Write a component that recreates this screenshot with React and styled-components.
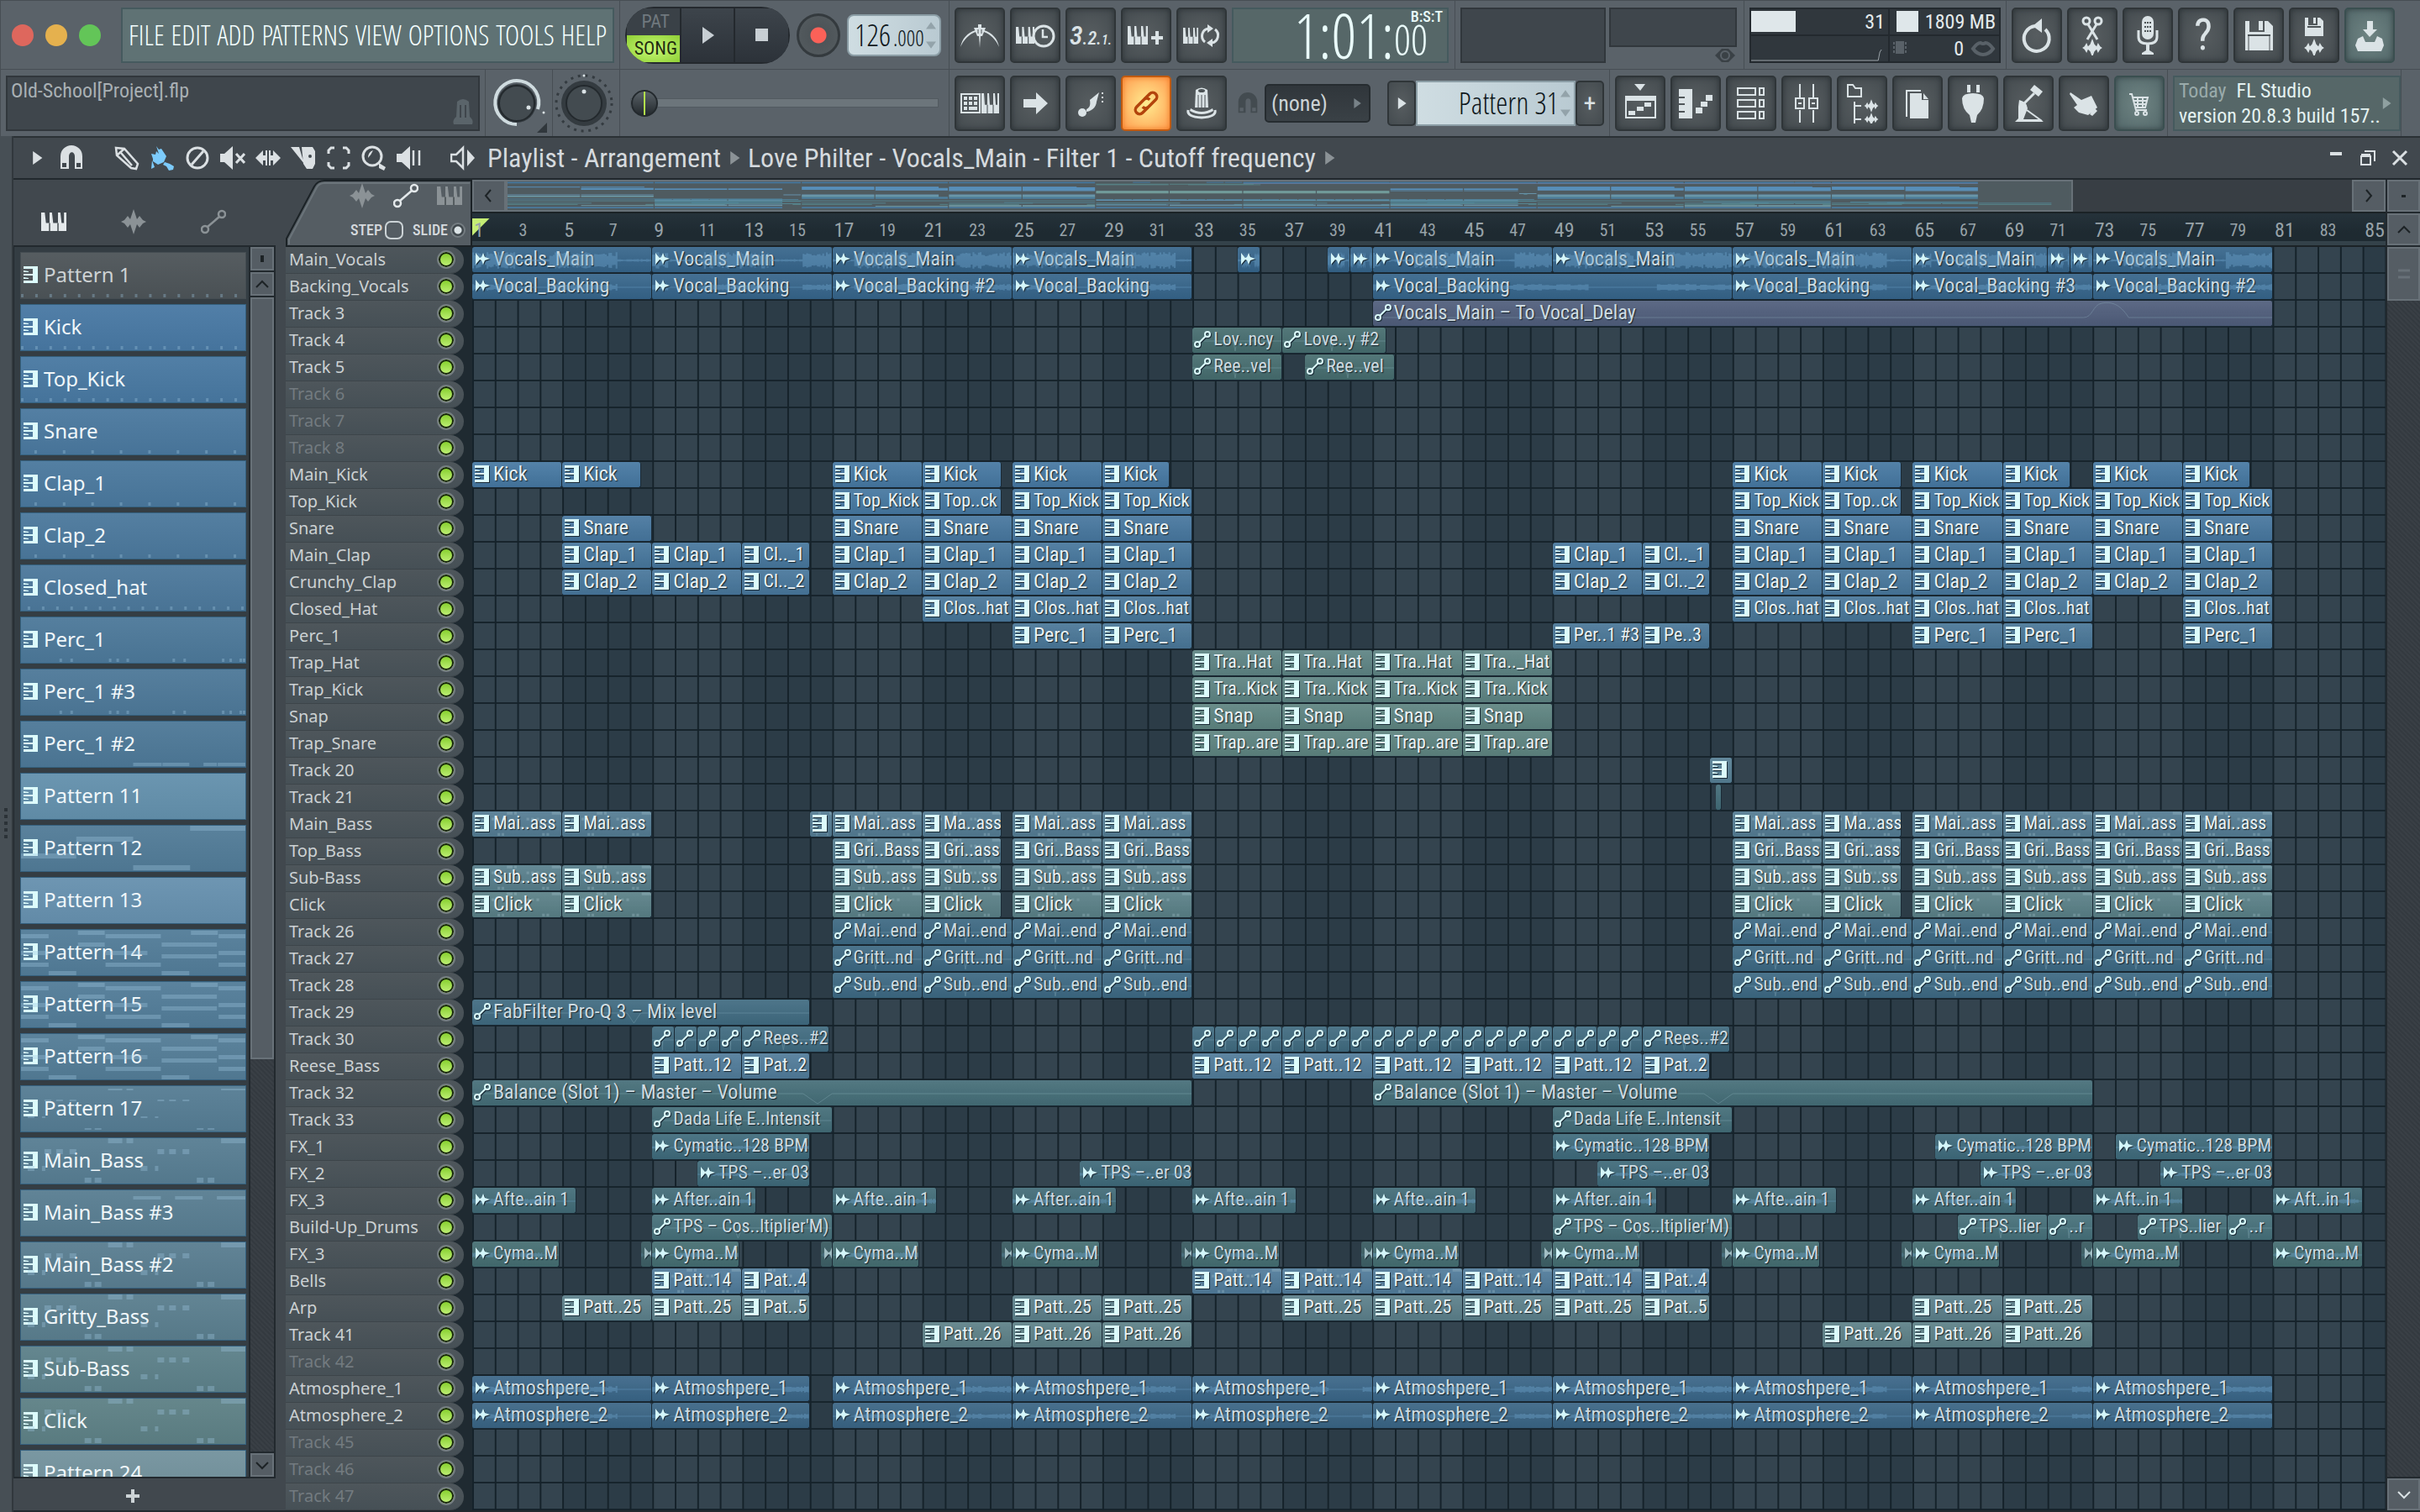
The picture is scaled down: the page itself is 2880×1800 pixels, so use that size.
import React, { useState } from "react";
import styled, { createGlobalStyle } from "styled-components";

const condensed = '"Roboto Condensed", "Open Sans Condensed", "Open Sans", sans-serif';
const light = '"Open Sans Condensed Light", "Roboto Condensed", sans-serif';

const GlobalStyle = createGlobalStyle`
  * { box-sizing: border-box; }
  body {
    margin: 0;
    background: #5a6269;
    color: #d5dade;
    font-family: ${condensed};
  }
  button, input, select {
    font-family: inherit;
    color: inherit;
    margin: 0;
    padding: 0;
    border: 0;
    background: none;
  }
  svg { display: block; flex: none; }
`;

/* ---------- data ---------- */

const BARS = 85;
const STEPS = 8;

const blocks = (starts, text, len = 4) => starts.map((s) => [s, len, text]);
const late = [57, 61, 65, 69, 73, 77];
const range = (a, b) => Array.from({ length: b - a + 1 }, (_, i) => a + i);

const drums = (text, short = text) => [
  ...blocks([17, 25, 29, 57, 65, 69, 73, 77], text),
  ...blocks([21, 61], short, 3.5),
];

const tracks = [
  {
    name: "Main_Vocals", kind: "audio", color: "#35648a", wave: 10,
    clips: [
      ...blocks([1, 9, 17, 25, 41, 49, 57, 73], "Vocals_Main", 8),
      [65, 6, "Vocals_Main"],
      ...blocks([35, 39, 40, 71, 72], "", 1),
    ],
  },
  {
    name: "Backing_Vocals", kind: "audio", color: "#35648a", wave: 4,
    clips: [
      ...blocks([1, 9, 25, 57], "Vocal_Backing", 8),
      [41, 16, "Vocal_Backing"],
      [17, 8, "Vocal_Backing #2"],
      [65, 8, "Vocal_Backing #3"],
      [73, 8, "Vocal_Backing #2"],
    ],
  },
  { name: "Track 3", kind: "auto", color: "#4f5d7b", clips: [[41, 40, "Vocals_Main – To Vocal_Delay"]] },
  { name: "Track 4", kind: "auto", color: "#456c6e", clips: [[33, 4, "Lov..ncy"], [37, 4.625, "Love..y #2"]] },
  { name: "Track 5", kind: "auto", color: "#456c6e", clips: [[33, 4, "Ree..vel"], [38, 4, "Ree..vel"]] },
  { name: "Track 6", off: true },
  { name: "Track 7", off: true },
  { name: "Track 8", off: true },
  {
    name: "Main_Kick", kind: "notes", color: "#4577a1",
    clips: [
      ...blocks([1, 17, 25, 57, 65, 73], "Kick"),
      ...blocks([5, 21, 61], "Kick", 3.5),
      ...blocks([29, 69, 77], "Kick", 3),
    ],
  },
  { name: "Top_Kick", kind: "notes", color: "#4577a0", clips: drums("Top_Kick", "Top..ck") },
  { name: "Snare", kind: "notes", color: "#46769e", clips: blocks([5, 17, 21, 25, 29, ...late], "Snare") },
  {
    name: "Main_Clap", kind: "notes", color: "#46769c",
    clips: [...blocks([5, 9, 17, 21, 25, 29, 49, ...late], "Clap_1"), ...blocks([13, 53], "Cl.._1", 3)],
  },
  {
    name: "Crunchy_Clap", kind: "notes", color: "#47769b",
    clips: [...blocks([5, 9, 17, 21, 25, 29, 49, ...late], "Clap_2"), ...blocks([13, 53], "Cl.._2", 3)],
  },
  { name: "Closed_Hat", kind: "notes", color: "#487699", clips: blocks([21, 25, 29, 57, 61, 65, 69, 77], "Clos..hat") },
  {
    name: "Perc_1", kind: "notes", color: "#497697",
    clips: [...blocks([25, 29, 65, 69, 77], "Perc_1"), [49, 4, "Per..1 #3"], [53, 3, "Pe..3"]],
  },
  { name: "Trap_Hat", kind: "notes", color: "#5d8383", clips: [...blocks([33, 37, 41], "Tra..Hat"), [45, 4, "Tra.._Hat"]] },
  { name: "Trap_Kick", kind: "notes", color: "#5d8382", clips: blocks([33, 37, 41, 45], "Tra..Kick") },
  { name: "Snap", kind: "notes", color: "#5d8380", clips: blocks([33, 37, 41, 45], "Snap") },
  { name: "Trap_Snare", kind: "notes", color: "#5d837f", clips: blocks([33, 37, 41, 45], "Trap..are") },
  { name: "Track 20", kind: "notes", color: "#557e93", clips: [[56, 1, ""]] },
  { name: "Track 21", kind: "sliver", color: "#426c78", clips: [[56.25, 0.25, ""]] },
  {
    name: "Main_Bass", kind: "notes", color: "#537b92", dots: true,
    clips: [...blocks([1, 5], "Mai..ass"), [16, 1, ""], ...drums("Mai..ass", "Ma..ass")],
  },
  { name: "Top_Bass", kind: "notes", color: "#547c90", dots: true, clips: drums("Gri..Bass", "Gri..ass") },
  { name: "Sub-Bass", kind: "notes", color: "#577e8b", dots: true, clips: [...blocks([1, 5], "Sub..ass"), ...drums("Sub..ass", "Sub..ss")] },
  { name: "Click", kind: "notes", color: "#597f86", dots: true, clips: [...blocks([1, 5], "Click"), ...drums("Click")] },
  { name: "Track 26", kind: "auto", color: "#3c6882", clips: blocks([17, 21, 25, 29, ...late], "Mai..end") },
  { name: "Track 27", kind: "auto", color: "#3c6882", clips: blocks([17, 21, 25, 29, ...late], "Gritt..nd") },
  { name: "Track 28", kind: "auto", color: "#3c6882", clips: blocks([17, 21, 25, 29, ...late], "Sub..end") },
  { name: "Track 29", kind: "auto", color: "#3f6a80", clips: [[1, 15, "FabFilter Pro-Q 3 – Mix level"]] },
  {
    name: "Track 30", kind: "auto", color: "#3f6a7f",
    clips: [...blocks([...range(9, 12), ...range(33, 52)], "", 1), ...blocks([13, 53], "Rees..#2", 3.875)],
  },
  {
    name: "Reese_Bass", kind: "notes", color: "#507b99",
    clips: [...blocks([9, 33, 37, 41, 45, 49], "Patt..12"), ...blocks([13, 53], "Pat..2", 3)],
  },
  { name: "Track 32", kind: "auto", color: "#446d77", clips: blocks([1, 41], "Balance (Slot 1) – Master – Volume", 32) },
  { name: "Track 33", kind: "auto", color: "#426c77", clips: blocks([9, 49], "Dada Life E..Intensit", 8) },
  { name: "FX_1", kind: "audio", color: "#3e6a7b", wave: 2, clips: blocks([9, 49, 66, 74], "Cymatic..128 BPM", 7) },
  { name: "FX_2", kind: "audio", color: "#3e6979", wave: 2, clips: blocks([11, 28, 51, 68, 76], "TPS –..er 03", 5) },
  {
    name: "FX_3", kind: "audio", color: "#416b77", wave: 3,
    clips: [
      ...blocks([1, 17, 33, 41, 57], "Afte..ain 1", 4.625),
      ...blocks([9, 25, 49, 65], "After..ain 1", 4.625),
      ...blocks([73, 81], "Aft..in 1", 4),
    ],
  },
  {
    name: "Build-Up_Drums", kind: "auto", color: "#456f79",
    clips: [
      ...blocks([9, 49], "TPS – Cos..ltiplier'M)", 8),
      ...blocks([67, 75], "TPS..lier", 4),
      ...blocks([71, 79], "..r", 2),
    ],
  },
  {
    name: "FX_3", kind: "audio", color: "#446d71", wave: 3,
    clips: [
      ...blocks([1, 9, 17, 25, 33, 41, 49, 57, 65, 73], "Cyma..M", 3.875),
      [81, 4, "Cyma..M"],
      ...blocks([8.5, 16.5, 24.5, 32.5, 40.5, 48.5, 56.5, 64.5, 72.5], null, 0.5),
    ],
  },
  {
    name: "Bells", kind: "notes", color: "#507b9a", dots: true,
    clips: [...blocks([9, 33, 37, 41, 45, 49], "Patt..14"), ...blocks([13, 53], "Pat..4", 3)],
  },
  {
    name: "Arp", kind: "notes", color: "#5b7f8a",
    clips: [...blocks([5, 9, 25, 29, 37, 41, 45, 49, 65, 69], "Patt..25"), ...blocks([13, 53], "Pat..5", 3)],
  },
  { name: "Track 41", kind: "notes", color: "#5c8087", clips: blocks([21, 25, 29, 61, 65, 69], "Patt..26") },
  { name: "Track 42", off: true },
  {
    name: "Atmosphere_1", kind: "audio", color: "#396587", wave: 4,
    clips: [...blocks([1, 17, 25, 33, 41, 49, 57, 65, 73], "Atmoshpere_1", 8), [9, 7, "Atmoshpere_1"]],
  },
  {
    name: "Atmosphere_2", kind: "audio", color: "#396484", wave: 3,
    clips: [...blocks([1, 17, 25, 33, 41, 49, 57, 65, 73], "Atmosphere_2", 8), [9, 7, "Atmosphere_2"]],
  },
  { name: "Track 45", off: true },
  { name: "Track 46", off: true },
  { name: "Track 47", off: true },
];

const every = (n, from) => {
  const out = [];
  for (let x = from; x < 268; x += n) out.push([x, 50, 3, 4]);
  return out;
};
const perc = [46, 59, 105, 114, 126, 181, 194, 240, 249, 261, 265].map((x) => [x, 50, 3, 4]);
const chords = [
  [68, 2, 32, 5], [203, 2, 32, 5], [0, 6, 33, 5], [101, 6, 66, 5], [236, 6, 33, 5],
  [68, 16, 32, 5], [168, 16, 66, 5], [0, 26, 33, 5], [101, 26, 50, 5], [168, 30, 66, 5], [236, 26, 33, 5],
  [0, 40, 33, 5], [101, 40, 66, 5], [236, 40, 33, 5], [33, 50, 33, 5], [168, 50, 33, 5],
];
const bassLine = [
  [104, 1, 17, 6], [126, 1, 8, 6], [239, 1, 29, 6], [28, 14, 8, 6], [42, 14, 8, 6], [58, 14, 8, 6],
  [163, 14, 8, 6], [177, 14, 8, 6], [193, 14, 8, 6], [8, 34, 8, 6], [25, 34, 4, 6],
  [143, 34, 8, 6], [160, 34, 4, 6], [76, 48, 8, 6], [88, 48, 8, 6], [210, 48, 8, 6], [223, 48, 8, 6],
];
const thinBass = bassLine.map(([x, y, w]) => [x, y + 3, w, 2]);

const patterns = [
  { name: "Pattern 1", color: "#4d5458", plain: true, notes: every(17, 0) },
  { name: "Kick", color: "#4878a3", notes: every(17, 0) },
  { name: "Top_Kick", color: "#4878a1", notes: every(17, 0) },
  { name: "Snare", color: "#4a789e", notes: every(34, 16) },
  { name: "Clap_1", color: "#4a789d", notes: every(34, 16) },
  { name: "Clap_2", color: "#4b789c", notes: every(34, 16) },
  { name: "Closed_hat", color: "#4c789b", notes: every(17, 8) },
  { name: "Perc_1", color: "#4c7899", notes: perc },
  { name: "Perc_1 #3", color: "#4d7898", notes: perc },
  { name: "Perc_1 #2", color: "#4d7897", notes: [[134, 50, 34, 4], [169, 50, 32, 4], [218, 50, 16, 4], [235, 50, 34, 4]] },
  { name: "Pattern 11", color: "#6390ac", notes: [] },
  { name: "Pattern 12", color: "#517b97", notes: [[202, 1, 67, 6], [66, 14, 68, 6], [0, 34, 66, 6], [134, 48, 68, 6]] },
  { name: "Pattern 13", color: "#6690ae", notes: [] },
  { name: "Pattern 14", color: "#527c98", notes: chords },
  { name: "Pattern 15", color: "#527c98", notes: chords },
  { name: "Pattern 16", color: "#537c96", notes: chords },
  { name: "Pattern 17", color: "#557c93", notes: thinBass },
  { name: "Main_Bass", color: "#577d92", notes: bassLine },
  { name: "Main_Bass #3", color: "#587d91", notes: [[134, 8, 33, 4], [184, 8, 33, 4], [234, 8, 34, 4]] },
  { name: "Main_Bass #2", color: "#597d90", notes: bassLine },
  { name: "Gritty_Bass", color: "#5a7e8e", notes: bassLine },
  { name: "Sub-Bass", color: "#5c8089", notes: bassLine },
  { name: "Click", color: "#5d8085", notes: bassLine },
  { name: "Pattern 24", color: "#73929d", notes: [] },
];

/* ---------- icons ---------- */

const Keys = ({ x = 0, y = 0, w = 21, h = 21 }) => (
  <g transform={`translate(${x} ${y}) scale(${w / 21} ${h / 21})`}>
    <path d="M0 0h3l1 12h3V0h2l1 12h4V0h2l1 12h2V0h2v21H0z" />
    <path d="M7 12v9M14 12v9" stroke="#3f474b" strokeWidth="1" />
  </g>
);

const Sparkle = ({ x, y, s = 1 }) => (
  <path
    transform={`translate(${x} ${y}) scale(${s})`}
    d="M-14 0l3-2 3-5 2 5 3-3 3-8 3 8 3 3 2-5 3 5 3 2-3 2-3 5-2-5-3 3-3 8-3-8-3-3-2 5-3-5z"
  />
);

const line = { fill: "none", stroke: "currentColor" };

const icons = {
  metronome: (
    <>
      <path d="M1 38C3 28 9 21 19 18v2C11 23 5 29 1 38zM47 38C45 28 39 21 29 18v2c8 3 14 9 18 18z" />
      <path d="M17 15h5v-4h4v4h5l-4 10h-6z" />
      <path d="M23 24h2l-1 15z" />
      <path d="M22 17v5M26 17v5" stroke="#4c5356" />
    </>
  ),
  wait: (
    <>
      <Keys x={1} y={14} w={22} h={20} />
      <circle cx="34" cy="25" r="12" fill="#51585b" stroke="currentColor" strokeWidth="3" />
      <path d="M33 17v9h6" {...line} strokeWidth="2.5" />
    </>
  ),
  keysPlus: (
    <>
      <Keys x={2} y={13} w={24} h={22} />
      <path d="M35 19h4v6h5v4h-5v6h-4v-6h-5v-4h5z" />
    </>
  ),
  keysLoop: (
    <>
      <Keys x={2} y={15} w={18} h={19} />
      <path d="M28 32a9 9 0 0 1 4-16M40 17a9 9 0 0 1-4 16" {...line} strokeWidth="3" />
      <path d="M31 11l7 5-7 5zM37 38l-7-5 7-5z" />
    </>
  ),
  typing: (
    <>
      <path d="M2 13h22v22H2z" {...line} strokeWidth="2" />
      <path d="M5 16h4v4H5zM11 16h4v4h-4zM17 16h4v4h-4zM5 22h4v4H5zM11 22h4v4h-4zM17 22h4v4h-4zM5 28h4v4H5zM11 28h10v4H11z" />
      <Keys x={26} y={12} w={21} h={24} />
    </>
  ),
  arrow: <path d="M10 19h15v-8l14 13-14 13v-8H10z" />,
  slide: (
    <>
      <circle cx="14" cy="35" r="5" />
      <path d="M19 34c8-1 13-7 12-16l-8 2c1 6 0 9-4 11z" />
      <path d="M23 20l11-9-3 11z" />
      <path d="M38 11v14" {...line} strokeWidth="2" strokeDasharray="2 3" />
    </>
  ),
  link: (
    <g {...line} strokeWidth="3.5" transform="rotate(-45 24 24)">
      <path d="M22 29h-9a5 5 0 0 1 0-10h12a5 5 0 0 1 5 5" />
      <path d="M26 19h9a5 5 0 0 1 0 10H23a5 5 0 0 1-5-5" />
    </g>
  ),
  knob: (
    <>
      <path d="M17 8q7-5 14 0l1 21H16z" />
      <ellipse cx="24" cy="9" rx="4" ry="2" fill="#4c5356" />
      <path d="M20 14v15M24 14v15M28 14v15" stroke="#4c5356" />
      <path d="M11 30q13 8 26 0l1 3q-14 8-28 0z" />
      <path d="M8 32q-2 8 16 9 18-1 16-9" {...line} strokeWidth="3" />
    </>
  ),
  playlist: (
    <>
      <path d="M17 1h13l-6 8zM6 15h37v6H6z" />
      <path d="M7 16h35v25H7z" {...line} strokeWidth="2" />
      <path d="M10 33h8v5h-8zM20 28h8v5h-8zM29 23h8v5h-8z" />
    </>
  ),
  pianoroll: (
    <>
      <path d="M4 7h16v35H4v-7h7v-2H4v-7h7v-2H4v-6h7v-2H4z" />
      <path d="M24 29h8v7h-8zM30 22h8v6h-8zM36 14h8v7h-8z" />
    </>
  ),
  rack: (
    <path
      d="M8 6h21v8H8zM34 6h5v8h-5zM8 20h21v8H8zM34 20h5v8h-5zM8 34h21v8H8zM34 34h5v8h-5z"
      {...line}
      strokeWidth="2"
    />
  ),
  mixer: (
    <g {...line} strokeWidth="2">
      <path d="M16 1v16M32 1v16M16 32v15M32 32v15M11 18h10v12H11zM27 18h10v12H27z" />
      <path d="M14 24h4M30 24h4" />
    </g>
  ),
  browser: (
    <>
      <path d="M7 2h6l3 4h7v10H7zM15 22v26M15 27h8M15 43h8" {...line} strokeWidth="2" />
      <Sparkle x={35} y={27} s={0.6} />
      <Sparkle x={35} y={43} s={0.6} />
    </>
  ),
  files: (
    <>
      <path d="M11 40V9h17" {...line} strokeWidth="2" />
      <path d="M15 12h14v8h8v22H15z" />
      <path d="M31 12l6 7h-6z" />
    </>
  ),
  plug: (
    <path d="M17 2h4v9h-4zM28 2h4v9h-4zM11 18q1-6 13-6t13 6q0 13-8 20l-2 9h-5l-2-9q-9-7-9-20z" />
  ),
  lamp: (
    <>
      <path d="M31 2l10 8-5 6-10-8z" />
      <path d="M31 12L19 24" {...line} strokeWidth="3" />
      <path d="M13 20q9 2 10 10l-5 13h20l4 3H8l4-4V28z" />
      <path d="M22 32l18 13" {...line} strokeWidth="2" />
    </>
  ),
  hand: <path d="M8 11l13 9 12-5 7 14-11 9-11-3-6-6 4-3-9-13zM37 30l3 3-6 6-3-2z" />,
  cart: (
    <g {...line} strokeWidth="2">
      <path d="M12 13h3l5 19h13M16 17h18l-3 12H19M17 21h16M18 25h14M22 17v12M28 17v12" />
      <circle cx="21" cy="36" r="2" />
      <circle cx="31" cy="36" r="2" />
    </g>
  ),
  undo: (
    <>
      <path d="M22 13a15 15 0 1 0 12 4" {...line} strokeWidth="4" />
      <path d="M30 4v17L19 13z" />
    </>
  ),
  cutWave: (
    <>
      <g {...line} strokeWidth="3">
        <circle cx="17" cy="7" r="4" />
        <circle cx="31" cy="7" r="4" />
        <path d="M19 11l11 18M29 11L18 29" />
      </g>
      <Sparkle x={24} y={39} s={0.85} />
    </>
  ),
  mic: (
    <>
      <rect x="17" y="1" width="14" height="28" rx="7" />
      <path d="M20 9h8M20 14h8M20 19h8" stroke="#4c5356" strokeWidth="2" strokeDasharray="2 1" />
      <path d="M13 18v8q0 8 11 8t11-8v-8" {...line} strokeWidth="3" />
      <path d="M22 34h4v8l5 3v2H17v-2l5-3z" />
    </>
  ),
  save: (
    <>
      <path d="M8 7h5v13h18V7h4l6 6v29H8z" />
      <path d="M24 7h5v11h-5z" />
      <path d="M11 24h27" stroke="#4c5356" strokeWidth="2" />
      <path d="M12 25v17M37 25v17" stroke="#4c5356" />
    </>
  ),
  saveWave: (
    <>
      <path d="M13 3h4v9h11V3h3l4 4v18H13z" />
      <path d="M23 3h3v7h-3z" />
      <path d="M16 14h16" stroke="#4c5356" strokeWidth="2" />
      <Sparkle x={24} y={39} s={0.85} />
    </>
  ),
  download: (
    <>
      <path d="M21 7h7v10h5l-9 9-8-9h5z" />
      <path d="M10 28l6-3 3 7h11l3-7 6 3 2 8-3 7H10l-3-7z" />
    </>
  ),
};

const Icon = ({ name, size = 48 }) => (
  <svg width={size} height={size} viewBox="0 0 48 48" fill="currentColor" aria-hidden="true">
    {icons[name]}
  </svg>
);

const toolIcons = {
  magnet: <path d="M2 28V13a12 12 0 0 1 26 0v15h-9V13a3 4 0 0 0-7 0v15zM4 21v5h5v-5zM21 21v5h5v-5z" fillRule="evenodd" />,
  pencil: (
    <g {...line} strokeWidth="2.5">
      <path d="M2 3l10 1 16 18-2 6-6-1L3 12zM8 9l13 15M12 4l-9 8" />
    </g>
  ),
  brush: (
    <path d="M8 1l3 4 3-1 6 9-3 7-7 3-6-4 0-3-2-6 5 1 1-4 3 3zM3 18l3 8-4 2zM18 20l6 2 5 3-1 4-5 1-3-5-4-2z" />
  ),
  ban: (
    <g {...line} strokeWidth="3">
      <circle cx="15" cy="15" r="12" />
      <path d="M8 23L22 7" />
    </g>
  ),
  mute: (
    <>
      <path d="M0 10h5l10-9v28L5 20H0z" />
      <path d="M19 10l10 11M29 10L19 21" {...line} strokeWidth="3" />
    </>
  ),
  slip: <path d="M0 15l9-9v6h3V6h2v18h-2v-6H9v6zM30 15l-9-9v6h-3V6h-2v18h2v-6h3v6z" />,
  slice: (
    <>
      <path d="M0 2h10l6 20zM13 2h13l3 5v15l-3 6h-7l-4-6z" />
      <circle cx="23" cy="13" r="2" fill="#41484e" />
    </>
  ),
  select: <path d="M3 10V6l3-3h4M20 3h4l3 3v4M27 20v4l-3 3h-4M10 27H6l-3-3v-4" {...line} strokeWidth="3" />,
  zoom: (
    <>
      <circle cx="13" cy="13" r="11" {...line} strokeWidth="3" />
      <path d="M8 15q0-7 6-9-2 5-6 9zM21 21l8 5-2 4-6-3z" />
    </>
  ),
  preview: (
    <>
      <path d="M0 10h6l10-9v28L6 20H0z" />
      <path d="M20 6v18M27 6v18" {...line} strokeWidth="2.5" />
    </>
  ),
  output: (
    <>
      <path d="M1 11h6l8-8v24l-8-8H1z" {...line} strokeWidth="2.5" />
      <path d="M20 5l9 10-9 10z" />
    </>
  ),
  keys: <Keys x={0} y={4} w={30} h={22} />,
  wave: <path d="M0 15l4-2 4-5 3 4 4-12 4 12 3-4 4 5 4 2-4 2-4 5-3-4-4 12-4-12-3 4-4-5z" />,
  auto: (
    <g {...line} strokeWidth="2.5">
      <circle cx="5" cy="24" r="4" />
      <circle cx="25" cy="6" r="4" />
      <path d="M8 21L22 9" />
    </g>
  ),
};

const ToolIcon = ({ name, size = 30 }) => (
  <svg width={size} height={size} viewBox="0 0 30 30" fill="currentColor" aria-hidden="true">
    {toolIcons[name]}
  </svg>
);

const KeyGlyph = () => (
  <svg width="18" height="20" viewBox="0 0 18 20" fill="#dcfcfc" aria-hidden="true">
    <path d="M11 0h6v20h-6zM0 0h12v3H0zM0 9h12v2H0zM0 17h12v3H0zM0 5l6 1v1H0zM0 13l6 1v1H0z" />
  </svg>
);

const clipGlyphs = {
  notes: <KeyGlyph />,
  audio: (
    <svg width="18" height="18" viewBox="0 0 18 18" fill="#d4f6fa" aria-hidden="true">
      <path d="M1 2l5 6 2-1 2-5 2 5 6 2-6 2-2 5-2-5-2-1-5 6z" />
    </svg>
  ),
  auto: (
    <svg width="22" height="22" viewBox="0 0 22 22" fill="none" stroke="#dcfcfc" strokeWidth="2" aria-hidden="true">
      <circle cx="5" cy="17" r="3" />
      <circle cx="17" cy="5" r="3" />
      <path d="M7 15l8-8" />
    </svg>
  ),
};

const Triangle = ({ dir = "right", size = 10, color = "currentColor" }) => {
  const d = { right: "M2 0l7 5-7 5z", up: "M0 8l5-7 5 7z", down: "M0 2l5 7 5-7z" }[dir];
  return (
    <svg width={size} height={size} viewBox="0 0 10 10" preserveAspectRatio="none" fill={color} aria-hidden="true">
      <path d={d} />
    </svg>
  );
};

const Chevron = ({ dir, color = "#1d2326" }) => {
  const d = { left: "M11 2L5 9l6 7", right: "M6 2l6 7-6 7", up: "M2 13l7-7 7 7", down: "M2 6l7 7 7-7" }[dir];
  return (
    <svg width="18" height="18" viewBox="0 0 18 18" fill="none" stroke={color} strokeWidth="2" aria-hidden="true">
      <path d={d} />
    </svg>
  );
};

/* ---------- top toolbar ---------- */

const Toolbar = styled.header`
  background: #5a6269;
  border-left: 1px solid #474e54;
`;

const ToolRow = styled.div`
  display: flex;
  height: ${(p) => p.$height}px;
  border-top: 1px solid #474e54;
`;

const Group = styled.div`
  display: flex;
  align-items: center;
  flex: ${(p) => (p.$grow ? "1 1 0" : "0 0 auto")};
  gap: ${(p) => p.$gap || 6}px;
  width: ${(p) => (p.$width ? `${p.$width}px` : "auto")};
  padding: 0 ${(p) => p.$pad ?? 6}px;
  border-right: ${(p) => (p.$last ? "0" : "1px solid #474e54")};
`;

const Lights = styled.div`
  display: flex;
  gap: 14px;
  padding: 0 18px 0 13px;
`;

const Light = styled.button`
  width: 26px;
  height: 26px;
  border-radius: 50%;
  background: ${(p) => p.$color};
`;

const MenuBar = styled.nav`
  display: flex;
  flex: 1;
  height: 66px;
  align-items: center;
  justify-content: space-between;
  margin-right: 6px;
  padding: 0 7px;
  background: #5f7274;
  border: 2px solid #455a5e;
`;

const MenuItem = styled.button`
  font-family: ${light};
  font-size: 33px;
  color: #f4ffff;
`;

const Transport = styled.div`
  display: flex;
  height: 68px;
  width: 196px;
  gap: 2px;
  padding: 2px;
  overflow: hidden;
  border-radius: 34px;
  background: #24292e;
`;

const ModeSwitch = styled.div`
  display: flex;
  flex-direction: column;
  flex: 1;
`;

const ModeButton = styled.button`
  flex: 1;
  font-size: 22px;
  line-height: 30px;
  padding-left: 6px;
  color: ${(p) => (p.$active ? "#1f2a10" : "#70787e")};
  background: ${(p) => (p.$active ? "radial-gradient(#c8fa78, #8fcf35)" : "#3a4147")};
`;

const TransportButton = styled.button`
  flex: 1;
  display: flex;
  align-items: center;
  justify-content: center;
  color: #c8cfd4;
  background: linear-gradient(#3d444b, #2c3239);
`;

const RecordButton = styled.button`
  width: 52px;
  height: 52px;
  border-radius: 50%;
  border: 3px solid #343a3e;
  background: radial-gradient(circle, #fb6158 9px, #4d5458 10px, #565d61);
`;

const Tempo = styled.label`
  display: flex;
  align-items: center;
  width: 112px;
  height: 50px;
  padding: 0 4px 0 7px;
  color: #10181c;
  border: 2px solid #8b9da5;
  border-radius: 8px;
  background: linear-gradient(90deg, #cfdde2, #b9cad2);

  input {
    width: 46px;
    font-family: ${light};
    font-size: 36px;
    line-height: 44px;
  }
  span {
    flex: 1;
    font-family: ${light};
    font-size: 26px;
    padding-top: 6px;
  }
`;

const Spinner = styled.span`
  && {
    display: flex;
    flex: none;
    flex-direction: column;
    gap: 10px;
    padding: 0;
  }
`;

const ToolButton = styled.button`
  display: flex;
  align-items: center;
  justify-content: center;
  flex: none;
  width: 60px;
  height: 66px;
  color: ${(p) => (p.$hot ? "#b3440c" : "#dbe3e6")};
  border: 2px solid ${(p) => (p.$hot ? "#c05a10" : p.$tint ? "#3a4f50" : "#2f3538")};
  border-radius: 5px;
  box-shadow: inset 0 0 6px ${(p) => (p.$hot ? "#f07820" : "rgba(20, 26, 30, 0.5)")};
  background: ${(p) =>
    p.$hot
      ? "radial-gradient(#ffec90, #ff9c50)"
      : p.$tint
        ? "radial-gradient(#6f8483, #53686a)"
        : "radial-gradient(#575d60, #444b4f)"};
`;

const CountIn = styled.span`
  font-size: 32px;
  font-style: italic;
  font-weight: 500;

  small { font-size: 22px; }
  sub { font-size: 16px; vertical-align: baseline; }
`;

const Help = styled.span`
  font-size: 52px;
  line-height: 60px;
`;

const TimeDisplay = styled.output`
  display: flex;
  justify-content: flex-end;
  width: 258px;
  height: 66px;
  padding-right: 5px;
  font-family: ${light};
  font-size: 74px;
  line-height: 62px;
  color: #eafcfb;
  background: #566768;
  border: 2px solid #455a5e;
`;

const TimeTail = styled.span`
  display: flex;
  flex-direction: column;
  align-items: flex-end;
  justify-content: space-between;
  height: 62px;
  font-size: 50px;
  line-height: 36px;

  b { padding: 0 18px 8px 0; font-weight: 400; }
`;

const TimeUnits = styled.small`
  font-family: ${condensed};
  font-size: 18px;
  line-height: 18px;
  font-weight: 500;
`;

const Panel = styled.div`
  display: flex;
  flex: ${(p) => p.$flex || "none"};
  height: ${(p) => p.$height || 66}px;
  background: #3f464c;
  border: 2px solid #31373c;
`;

const Scope = styled.div`
  display: flex;
  flex: 154 1 0;
  height: 66px;
  flex-direction: column;
  align-items: flex-end;
  gap: 1px;
  padding-right: 2px;

  > div { align-self: stretch; }
`;

const Monitor = styled.div`
  display: grid;
  grid-template-columns: 163fr 130fr;
  gap: 2px 2px;
  flex: 1;
  height: 66px;
  padding: 2px;
  background: #23292e;
  font-size: 24px;
  line-height: 28px;
  color: #e4eaec;
`;

const MonitorCell = styled.div`
  display: flex;
  align-items: center;
  justify-content: space-between;
  height: 30px;
  padding: 0 4px 0 ${(p) => p.$inset || 0}px;
  background: #30373d;
`;

const VoiceCount = styled.span`
  flex: 1;
  padding-right: 8px;
  text-align: right;
`;

const Meter = styled.i`
  width: ${(p) => p.$width}px;
  height: 25px;
  background: #dfe7ea;
`;

const HintPanel = styled(Panel)`
  flex: 1;
  padding: 2px 4px 4px;
  font-size: 24px;
  line-height: 28px;
  color: #a9b0b4;
  justify-content: space-between;

  svg { align-self: flex-end; }
`;

const KnobButton = styled.button`
  display: flex;
`;

const PitchRange = styled.input`
  appearance: none;
  flex: 1;
  height: 40px;

  &::-webkit-slider-runnable-track {
    height: 11px;
    background: #6c757b;
    border: 1px solid #525a60;
  }
  &::-webkit-slider-thumb {
    appearance: none;
    width: 32px;
    height: 32px;
    margin-top: -11px;
    border-radius: 50%;
    border: 2px solid #23292d;
    background: linear-gradient(90deg, transparent 13px, #b2e04c 13px, #b2e04c 15px, transparent 15px),
      linear-gradient(#5a6268, #23292d);
  }
`;

const SnapField = styled.label`
  display: flex;
  align-items: center;
  justify-content: space-between;
  width: 126px;
  height: 46px;
  padding: 0 8px 0 6px;
  color: #ccd3d6;
  border: 2px solid #262c30;
  border-radius: 5px;
  background: linear-gradient(#30363b, #3a4146);

  select {
    appearance: none;
    flex: 1;
    min-width: 0;
    font-size: 26px;
  }
`;

const SnapMagnet = styled.span`
  color: #434b50;
`;

const PatternPicker = styled.div`
  display: flex;
  align-items: stretch;
  height: 54px;
`;

const SideButton = styled.button`
  display: flex;
  align-items: center;
  justify-content: center;
  width: 34px;
  font-size: 30px;
  color: #dbe3e6;
  border: 2px solid #2f3538;
  border-radius: 5px;
  background: radial-gradient(#575d60, #444b4f);
`;

const PatternField = styled.label`
  display: flex;
  align-items: center;
  width: 190px;
  padding-right: 4px;
  color: #10181c;
  border: 2px solid #8b9da5;
  background: linear-gradient(90deg, #cfdde2, #b9cad2);

  select {
    appearance: none;
    flex: 1;
    min-width: 0;
    padding-right: 2px;
    font-family: ${light};
    font-size: 36px;
    text-align: right;
    text-align-last: right;
  }
`;

const News = styled.a`
  display: flex;
  align-items: center;
  flex: 1;
  height: 66px;
  padding: 0 8px 0 5px;
  font-size: 24px;
  line-height: 30px;
  text-decoration: none;
  color: #e4f2f1;
  background: #566768;
  border: 2px solid #455a5e;

  p { flex: 1; margin: 0; white-space: nowrap; }
  span { margin-right: 12px; color: #9aabab; }
`;

const Knob = ({ dotted }) => (
  <svg width="74" height="74" viewBox="0 0 74 74" aria-hidden="true">
    {dotted ? (
      <circle cx="37" cy="37" r="33" fill="none" stroke="#343b40" strokeWidth="3" strokeDasharray="3 5.7" />
    ) : (
      <path d="M37 62A26 26 0 1 1 62 44" fill="none" stroke="#cfdbdf" strokeWidth="4" />
    )}
    <circle cx="37" cy="37" r={dotted ? 27 : 23} fill="#343b40" />
    <circle cx="37" cy="37" r="21" fill="#434b50" stroke="#23292d" strokeWidth="2" />
    <circle cx={dotted ? 37 : 51} cy={dotted ? 23 : 42} r="2.5" fill="#dbe3e6" />
    <circle cx={dotted ? 37 : 69} cy={dotted ? 4 : 48} r="1.5" fill="#dbe3e6" />
    {!dotted && <path d="M73 60v12H61z" fill="#30373c" />}
  </svg>
);

const buttonRow = (list) =>
  list.map(([name, label, style]) => (
    <ToolButton key={name} aria-label={label} $tint={style === "tint"} $hot={style === "hot"}>
      <Icon name={name} />
    </ToolButton>
  ));

const TopBar = () => (
  <Toolbar>
    <ToolRow $height={82}>
      <Group $width={737} $pad={0}>
        <Lights>
          <Light $color="#de675d" aria-label="Close" />
          <Light $color="#e5b14e" aria-label="Minimize" />
          <Light $color="#63c558" aria-label="Zoom" />
        </Lights>
        <MenuBar>
          {["FILE", "EDIT", "ADD", "PATTERNS", "VIEW", "OPTIONS", "TOOLS", "HELP"].map((m) => (
            <MenuItem key={m}>{m}</MenuItem>
          ))}
        </MenuBar>
      </Group>
      <Group $width={392} $gap={8}>
        <Transport>
          <ModeSwitch>
            <ModeButton>PAT</ModeButton>
            <ModeButton $active>SONG</ModeButton>
          </ModeSwitch>
          <TransportButton aria-label="Play">
            <Triangle size={20} />
          </TransportButton>
          <TransportButton aria-label="Stop">
            <svg width="15" height="15" aria-hidden="true">
              <rect width="15" height="15" fill="currentColor" />
            </svg>
          </TransportButton>
        </Transport>
        <RecordButton aria-label="Record" />
        <Tempo>
          <input aria-label="Tempo" defaultValue="126" />
          <span>.000</span>
          <Spinner>
            <Triangle dir="up" size={12} color="#93a3aa" />
            <Triangle dir="down" size={12} color="#93a3aa" />
          </Spinner>
        </Tempo>
      </Group>
      <Group $width={602}>
        {buttonRow([["metronome", "Metronome"], ["wait", "Wait for input"]])}
        <ToolButton aria-label="Countdown">
          <CountIn>3<small>.2.</small><sub>1.</sub></CountIn>
        </ToolButton>
        {buttonRow([["keysPlus", "Blend notes"], ["keysLoop", "Loop recording"]])}
        <TimeDisplay>
          1:01:
          <TimeTail>
            <TimeUnits>B:S:T</TimeUnits>
            <b>00</b>
          </TimeTail>
        </TimeDisplay>
      </Group>
      <Group $grow $gap={4}>
        <Panel $flex="172 1 0" />
        <Scope>
          <Panel $height={47} />
          <svg width="28" height="18" viewBox="0 0 28 18" aria-hidden="true">
            <path d="M2 9l8-8h8l8 8-8 8h-8z" fill="#3a4146" />
            <circle cx="14" cy="9" r="5" fill="none" stroke="#5a6269" strokeWidth="2" />
          </svg>
        </Scope>
      </Group>
      <Group $width={312}>
        <Monitor>
          <MonitorCell>
            <Meter $width={53} />
            31
          </MonitorCell>
          <MonitorCell $inset={8}>
            <Meter $width={26} />
            1809 MB
          </MonitorCell>
          <MonitorCell>
            <svg width="100%" height="30" viewBox="0 0 163 30" preserveAspectRatio="none" aria-hidden="true">
              <path d="M0 29h155l2-10 2-3" fill="none" stroke="#9aa3a8" />
            </svg>
          </MonitorCell>
          <MonitorCell $inset={4}>
            <svg width="16" height="18" aria-hidden="true">
              <rect x="3" width="10" height="15" fill="#596168" />
              <path d="M1 1v14M15 1v14" stroke="#596168" strokeWidth="2" strokeDasharray="3 2" />
            </svg>
            <VoiceCount>0</VoiceCount>
            <svg width="30" height="20" viewBox="0 0 30 20" aria-hidden="true">
              <path d="M3 10q5-7 9-7 3 2 6 0 4 0 9 7-5 7-12 7T3 10z" fill="none" stroke="#596168" strokeWidth="4" />
            </svg>
          </MonitorCell>
        </Monitor>
      </Group>
      <Group $width={492} $last>
        {buttonRow([["undo", "Undo"], ["cutWave", "Edit audio"], ["mic", "Record audio"]])}
        <ToolButton aria-label="Help">
          <Help>?</Help>
        </ToolButton>
        {buttonRow([["save", "Save"], ["saveWave", "Export"], ["download", "Install", "tint"]])}
      </Group>
    </ToolRow>
    <ToolRow $height={80}>
      <Group $width={577}>
        <HintPanel>
          Old-School[Project].flp
          <svg width="28" height="34" viewBox="0 0 28 34" fill="#5a646a" aria-hidden="true">
            <path d="M7 5q7-6 14 0l1 18q5 4 3 9H3q-2-5 3-9z" />
            <path d="M11 9v15M17 9v15" stroke="#3f464c" strokeWidth="2" />
          </svg>
        </HintPanel>
      </Group>
      <Group $width={80} $pad={0}>
        <KnobButton aria-label="Main volume">
          <Knob />
        </KnobButton>
      </Group>
      <Group $width={80} $pad={0}>
        <KnobButton aria-label="Main pitch">
          <Knob dotted />
        </KnobButton>
      </Group>
      <Group $width={392} $pad={12}>
        <PitchRange type="range" aria-label="Song position" defaultValue="0" />
      </Group>
      <Group $grow>
        {buttonRow([
          ["typing", "Typing keyboard"],
          ["arrow", "Step edit"],
          ["slide", "Slide notes"],
          ["link", "Multilink", "hot"],
          ["knob", "Controllers"],
        ])}
        <Group $grow $last $gap={7} $pad={6}>
          <SnapMagnet>
            <ToolIcon name="magnet" size={26} />
          </SnapMagnet>
          <SnapField>
            <select aria-label="Snap">
              <option>(none)</option>
            </select>
            <Triangle size={12} color="#788288" />
          </SnapField>
        </Group>
        <PatternPicker>
          <SideButton aria-label="Pattern menu">
            <Triangle size={14} />
          </SideButton>
          <PatternField>
            <select aria-label="Pattern">
              <option>Pattern 31</option>
            </select>
            <Spinner>
              <Triangle dir="up" size={12} color="#93a3aa" />
              <Triangle dir="down" size={12} color="#93a3aa" />
            </Spinner>
          </PatternField>
          <SideButton aria-label="Add pattern">+</SideButton>
        </PatternPicker>
      </Group>
      <Group $width={664}>
        {buttonRow([
          ["playlist", "Playlist"],
          ["pianoroll", "Piano roll"],
          ["rack", "Channel rack"],
          ["mixer", "Mixer"],
          ["browser", "Browser"],
          ["files", "Project picker"],
          ["plug", "Plugin picker"],
          ["lamp", "Tempo tapper"],
          ["hand", "Touch controllers"],
          ["cart", "Shop", "tint"],
        ])}
      </Group>
      <Group $width={278}>
        <News href="#news">
          <p>
            <span>Today</span>FL Studio
            <br />
            version 20.8.3 build 157..
          </p>
          <Triangle size={14} color="#8fa0a0" />
        </News>
      </Group>
      <Group $width={22} $last />
    </ToolRow>
  </Toolbar>
);

/* ---------- playlist window ---------- */

const Window = styled.main`
  display: grid;
  grid-template-columns: 16px minmax(0, 1fr);
  background: #41484e;
`;

const Rail = styled.div`
  display: flex;
  align-items: center;
  justify-content: center;
  background: #474f55;
  border-right: 2px solid #31383d;
`;

const TitleBar = styled.div`
  display: flex;
  align-items: center;
  height: 50px;
  padding: 0 14px 0 20px;
  border-top: 2px solid #2b3135;
  background: #41484e;
`;

const Tools = styled.div`
  display: flex;
  align-items: center;
  flex: 1;
  gap: 12px;
  padding-left: 36px;
`;

const Tool = styled.button`
  display: flex;
  margin-left: ${(p) => p.$indent || 0}px;
  color: ${(p) => (p.$active ? "#7ccbfb" : "#dbe0e3")};
`;

const Crumbs = styled.h1`
  display: flex;
  align-items: center;
  gap: 8px;
  flex: 1;
  margin: 0 0 0 2px;
  font-size: 32px;
  line-height: 36px;
  font-weight: 400;
  color: #d5dade;
`;

const WindowButtons = styled.div`
  display: flex;
  align-items: center;
  gap: 18px;
  color: #dbe0e3;

  button { display: flex; }
`;

const Body = styled.div`
  display: flex;
  border-top: 2px solid #22292e;
  border-bottom: 2px solid #22292e;
`;

const LeftPane = styled.aside`
  display: flex;
  flex-direction: column;
  flex: none;
  width: 312px;
`;

const Tabs = styled.div`
  display: flex;
  gap: 65px;
  height: 78px;
  padding: 35px 0 0 33px;
`;

const Tab = styled.button`
  display: flex;
  height: 30px;
  color: ${(p) => (p.$active ? "#e4e9eb" : "#8b9296")};
`;

const ListFrame = styled.div`
  display: flex;
  flex: 1;
  contain: size;
  overflow: hidden;
  border: 2px solid #22292e;
  border-left-width: 1px;
`;

const PatternList = styled.ul`
  display: flex;
  flex-direction: column;
  gap: 6px;
  flex: 1;
  margin: 0;
  padding: 6px 3px 0 7px;
  list-style: none;
  background: #343d43;
`;

const PatternButton = styled.button`
  display: grid;
  align-items: center;
  width: 100%;
  height: 56px;
  text-align: left;
  color: ${(p) => (p.$plain ? "#cdd2d4" : "#f0f7fa")};
  border: 1px solid ${(p) => (p.$plain ? "#454d52" : "#35617f")};
  background: linear-gradient(rgba(255, 255, 255, 0.05), rgba(0, 0, 0, 0.04)), ${(p) => p.$color};

  > * { grid-area: 1 / 1; }
`;

const PatternLabel = styled.span`
  display: flex;
  align-items: center;
  gap: 6px;
  padding: 0 0 2px 3px;
  font-family: "Noto Sans", sans-serif;
  font-size: 24px;
  line-height: 28px;
`;

const ScrollColumn = styled.div`
  display: flex;
  flex-direction: column;
  gap: 2px;
  width: ${(p) => p.$width}px;
  border-left: 2px solid #22292e;
  background: #22292e;
`;

const ScrollButton = styled.button`
  display: flex;
  align-items: center;
  justify-content: center;
  flex: none;
  width: ${(p) => (p.$width ? `${p.$width}px` : "auto")};
  height: ${(p) => p.$height}px;
  border: 2px solid #687178;
  background: #555d64;
`;

const ScrollTrack = styled.div`
  flex: 1;
  background: repeating-linear-gradient(45deg, #393f45 0 2px, #343a40 2px 4px);
`;

const ScrollThumb = styled.div`
  display: flex;
  align-items: center;
  justify-content: center;
  height: ${(p) => p.$size};
  border: 2px solid #687178;
  background: #555d64;
`;

const AddRow = styled.div`
  display: flex;
  height: 38px;
  padding: 4px 0 0 134px;
  align-items: center;

  button { display: flex; }
`;

const TrackHeads = styled.div`
  flex: none;
  width: 222px;
  margin-left: 12px;
  background: #1f2a31;
`;

const TabHead = styled.div`
  display: grid;
  height: 80px;
  background: #41484e;

  > * { grid-area: 1 / 1; }
`;

const TabContent = styled.div`
  display: flex;
  flex-direction: column;
  align-items: flex-end;
  gap: 14px;
  padding: 3px 8px 0 0;
`;

const TabIcons = styled.div`
  display: flex;
  align-items: center;
  gap: 22px;
  height: 32px;
  padding-right: 4px;
`;

const Toggles = styled.div`
  display: flex;
  align-items: center;
  gap: 3px;
  font-size: 18px;
  line-height: 22px;
  font-weight: 500;

  label { margin-left: 8px; }
`;

const Check = styled.input`
  appearance: none;
  width: ${(p) => (p.type === "radio" ? 18 : 22)}px;
  height: ${(p) => (p.type === "radio" ? 18 : 22)}px;
  border: 2px solid ${(p) => (p.type === "radio" ? "#757d82" : "#ccd3d6")};
  border-radius: ${(p) => (p.type === "radio" ? "50%" : "7px")};
  background: ${(p) => (p.type === "radio" ? "radial-gradient(circle, #dbe3e6 4px, #3f474c 5px)" : "none")};
`;

const TrackHead = styled.div`
  display: flex;
  align-items: center;
  justify-content: space-between;
  height: 32px;
  margin-right: 10px;
  padding: 0 10px 2px 4px;
  font-family: "Noto Sans", sans-serif;
  font-size: 20px;
  line-height: 26px;
  color: ${(p) => (p.$off ? "#737b80" : "#ccd1d3")};
  border-bottom: 1px solid #3d454a;
  border-radius: 0 16px 16px 0;
  background: linear-gradient(#4e565b, #465056);
`;

const Led = styled.button`
  width: 22px;
  height: 22px;
  border: 2px solid #757d82;
  border-radius: 50%;
  box-shadow: inset 0 0 0 2px #16230c;
  background: linear-gradient(#7fcb25, #c4f37c);
`;

const Timeline = styled.div`
  flex: 1;
  min-width: 0;
  background: #1f2a31;
`;

const Overview = styled.div`
  display: flex;
  height: 40px;
  border-bottom: 2px solid #1b2226;
  background: #383e44;
`;

const OverviewView = styled.div`
  flex: 1864 1 0;
  border: 2px solid #687178;
  background: #4f5b60;
`;

const OverviewRest = styled.div`
  flex: 333 1 0;
`;

const Ruler = styled.ol`
  display: grid;
  grid-template-columns: repeat(${BARS}, minmax(0, 1fr));
  align-items: center;
  height: 40px;
  margin: 0;
  padding: 2px 0 0;
  list-style: none;
  color: #97a2a8;
  border-bottom: 2px solid #1b2226;
  background: linear-gradient(#25323a, #1e2a31 60%, #1e2a31 86%, #34424a 88%);
`;

const RulerMark = styled.li`
  grid-column: span ${(p) => p.$span || 2};
  padding-left: 2px;
  font-size: ${(p) => (p.$major ? 24 : 20)}px;
  line-height: 28px;

  &:first-child {
    background: linear-gradient(135deg, #c6ee74 14px, transparent 15px);
  }
`;

const Lanes = styled.div`
  background:
    linear-gradient(90deg, #15222a 2px, transparent 2px) 0 0 / calc(100% / ${BARS}) 32px,
    linear-gradient(transparent 30px, #17242c 30px) 0 0 / 100% 32px,
    linear-gradient(90deg, #34444f 50%, #2c3c47 50%) 0 0 / calc(100% / ${BARS} * 8) 100%;
`;

const Lane = styled.div`
  display: grid;
  grid-template-columns: repeat(${BARS * STEPS}, minmax(0, 1fr));
  height: 32px;
`;

const Clip = styled.div`
  grid-row: 1;
  display: grid;
  align-items: center;
  height: 31px;
  overflow: hidden;
  opacity: ${(p) => (p.$faint ? 0.7 : 1)};
  border-radius: 3px;
  border-right: 1px solid #1a2a36;
  border-bottom: 1px solid #1a2a36;
  background: linear-gradient(rgba(255, 255, 255, 0.08), rgba(0, 0, 0, 0.06)), ${(p) => p.$color};

  > * { grid-area: 1 / 1; min-width: 0; }
`;

const ClipLabel = styled.span`
  display: flex;
  align-items: center;
  gap: ${(p) => (p.$kind === "auto" ? 2 : 4)}px;
  padding: 0 0 2px ${(p) => (p.$kind === "auto" ? 1 : 3)}px;
  font-size: ${(p) => (p.$tight ? 22 : 24)}px;
  line-height: 28px;
  white-space: nowrap;
  color: ${(p) => (p.$kind === "notes" ? "#eaf2f4" : "#cfdce2")};
  text-shadow: 1px 1px 1px #16242c;

  svg { filter: drop-shadow(1px 1px 0 #1a2a36); }
`;

// Pseudo random audio outline, the same for the same seed
const wavePath = (seed, height) => {
  let d = "";
  let n = seed * 7919;
  for (let x = 0; x < 100; x += 1) {
    n = (n * 1103515245 + 12345) % 2147483648;
    const burst = Math.sin(x / 9 + seed) > -0.5 ? 1 : 0.15;
    const h = Math.max(0.5, (0.5 + (n % 100) / 200) * height * burst);
    d += `M${x} ${16 - h}h1v${h * 2}h-1z`;
  }
  return d;
};

const ClipArt = ({ track, start }) => {
  if (track.kind === "audio") {
    return (
      <svg width="100%" height="30" viewBox="0 0 100 30" preserveAspectRatio="none" fill="#6fa6cf" opacity="0.4">
        <path d={wavePath(start, track.wave)} />
      </svg>
    );
  }
  if (track.kind === "auto") {
    const long = track.name === "Track 3";
    return (
      <svg width="100%" height="30" viewBox="0 0 100 30" preserveAspectRatio="none" fill="none" stroke="#9cc0cc" opacity="0.3">
        <path
          vectorEffect="non-scaling-stroke"
          d={long ? "M0 20h79c1 0 1-15 2-17s2 0 3 17h16" : "M0 16h46l2 12 2-12h50"}
        />
      </svg>
    );
  }
  if (track.dots) {
    return (
      <svg width="100%" height="30" viewBox="0 0 268 56" preserveAspectRatio="none" fill="#a9c6d2" opacity="0.3">
        {bassLine.map(([x, y, w, h]) => (
          <rect key={`${x}-${y}`} x={x} y={y} width={w} height={h} />
        ))}
      </svg>
    );
  }
  return null;
};

const col = (bar) => Math.round((bar - 1) * STEPS) + 1;

// Shortened names and long names on short clips take the smaller size
const isTight = (text, length) => !!text && (text.includes("..") || (text.length > 7 && length <= 4));

const TrackClip = ({ track, clip: [start, length, text] }) => (
  <Clip
    $color={track.color}
    $faint={text === null}
    style={{ gridColumn: `${col(start)} / ${col(start + length)}` }}
  >
    <ClipArt track={track} start={start} />
    {track.kind !== "sliver" && (
      <ClipLabel $kind={track.kind} $tight={isTight(text, length)}>
        {clipGlyphs[track.kind]}
        {text}
      </ClipLabel>
    )}
  </Clip>
);

const brighter = (hex) =>
  "#" +
  [1, 3, 5]
    .map((i) => Math.min(255, Math.round(parseInt(hex.slice(i, i + 2), 16) * 1.3)))
    .map((v) => v.toString(16).padStart(2, "0"))
    .join("");

const MiniMap = () => (
  <svg width="100%" height="34" viewBox={`0 0 ${BARS} 48`} preserveAspectRatio="none" aria-label="Overview">
    {tracks.map((t, row) =>
      (t.clips || []).map(([s, len]) => (
        <rect key={`${row}-${s}`} x={s - 1} y={row + 1} width={len - 0.06} height="1.1" fill={brighter(t.color)} />
      ))
    )}
  </svg>
);

const Patterns = () => {
  const [selected, setSelected] = useState("Pattern 31");
  return (
    <PatternList>
      {patterns.map((p) => (
        <li key={p.name}>
          <PatternButton
            $color={p.color}
            $plain={p.plain}
            aria-pressed={selected === p.name}
            onClick={() => setSelected(p.name)}
          >
            <svg width="100%" height="54" viewBox="0 0 268 54" preserveAspectRatio="none" fill="#9cc4de" opacity="0.35">
              {p.notes.map(([x, y, w, h]) => (
                <rect key={`${x}-${y}`} x={x} y={y - 1} width={w} height={h} />
              ))}
            </svg>
            <PatternLabel>
              <KeyGlyph />
              {p.name}
            </PatternLabel>
          </PatternButton>
        </li>
      ))}
    </PatternList>
  );
};

const Playlist = () => (
  <Window>
    <Rail>
      <svg width="4" height="40" aria-hidden="true">
        <path d="M2 1v38" stroke="#2b3237" strokeWidth="4" strokeDasharray="4 4" />
      </svg>
    </Rail>
    <div>
      <TitleBar>
        <Tool aria-label="Menu">
          <Triangle size={16} />
        </Tool>
        <Tool aria-label="Snap" $indent={18}>
          <ToolIcon name="magnet" />
        </Tool>
        <Tools>
          {["pencil", "brush", "ban", "mute", "slip", "slice", "select", "zoom", "preview"].map((t) => (
            <Tool key={t} aria-label={t} $active={t === "brush"}>
              <ToolIcon name={t} />
            </Tool>
          ))}
          <Tool aria-label="output" $indent={22}>
            <ToolIcon name="output" />
          </Tool>
          <Crumbs>
            Playlist - Arrangement
            <Triangle size={16} color="#8b9296" />
            Love Philter - Vocals_Main - Filter 1 - Cutoff frequency
            <Triangle size={16} color="#8b9296" />
          </Crumbs>
        </Tools>
        <WindowButtons>
          <button aria-label="Minimize window">
            <svg width="20" height="20">
              <path d="M3 3h14v4H3z" fill="currentColor" />
            </svg>
          </button>
          <button aria-label="Restore window">
            <svg width="20" height="20" {...line} strokeWidth="2">
              <path d="M2 8h11v10H2zM6 2h12v12M2 6h11" />
            </svg>
          </button>
          <button aria-label="Close window">
            <svg width="20" height="20" {...line} strokeWidth="3">
              <path d="M2 2l16 16M18 2L2 18" />
            </svg>
          </button>
        </WindowButtons>
      </TitleBar>
      <Body>
        <LeftPane>
          <Tabs>
            <Tab $active aria-label="Patterns">
              <ToolIcon name="keys" />
            </Tab>
            <Tab aria-label="Audio">
              <ToolIcon name="wave" />
            </Tab>
            <Tab aria-label="Automation">
              <ToolIcon name="auto" />
            </Tab>
          </Tabs>
          <ListFrame>
            <Patterns />
            <ScrollColumn $width={30}>
              <ScrollButton $height={28} aria-label="List options">
                <svg width="4" height="8">
                  <rect width="4" height="8" fill="#1d2326" />
                </svg>
              </ScrollButton>
              <ScrollButton $height={28} aria-label="Scroll list up">
                <Chevron dir="up" />
              </ScrollButton>
              <ScrollTrack>
                <ScrollThumb $size="66%" />
              </ScrollTrack>
              <ScrollButton $height={28} aria-label="Scroll list down">
                <Chevron dir="down" />
              </ScrollButton>
            </ScrollColumn>
          </ListFrame>
          <AddRow>
            <button aria-label="Add pattern">
              <svg width="16" height="16">
                <path d="M6 0h4v6h6v4h-6v6H6v-6H0V6h6z" fill="#ccd3d6" />
              </svg>
            </button>
          </AddRow>
        </LeftPane>
        <TrackHeads>
          <TabHead>
            <svg width="100%" height="80" viewBox="0 0 222 80" preserveAspectRatio="none" aria-hidden="true">
              <path d="M1 79V70L34 8Q38 1 46 1h175v78z" fill="#555d63" stroke="#1b2226" strokeWidth="2" />
              <path d="M4 77v-6L37 9q3-5 9-5h173" fill="none" stroke="#6b747a" strokeWidth="2" />
            </svg>
            <TabContent>
              <TabIcons>
                <Tab aria-label="Show audio">
                  <ToolIcon name="wave" />
                </Tab>
                <Tab $active aria-label="Show automation">
                  <ToolIcon name="auto" />
                </Tab>
                <Tab aria-label="Show patterns">
                  <ToolIcon name="keys" />
                </Tab>
              </TabIcons>
              <Toggles>
                <label htmlFor="step">STEP</label>
                <Check type="checkbox" id="step" />
                <label htmlFor="slide">SLIDE</label>
                <Check type="radio" id="slide" />
              </Toggles>
            </TabContent>
          </TabHead>
          {tracks.map((t, i) => (
            <TrackHead key={i} $off={t.off}>
              {t.name}
              <Led aria-label={`Mute ${t.name}`} />
            </TrackHead>
          ))}
        </TrackHeads>
        <Timeline>
          <Overview>
            <ScrollButton $width={40} $height={38} aria-label="Scroll left">
              <Chevron dir="left" />
            </ScrollButton>
            <OverviewView>
              <MiniMap />
            </OverviewView>
            <OverviewRest />
            <ScrollButton $width={40} $height={38} aria-label="Scroll right">
              <Chevron dir="right" />
            </ScrollButton>
          </Overview>
          <Ruler>
            {range(0, 41).map((n) => (
              <RulerMark key={n} $major={n % 2 === 0}>
                {n * 2 + 1}
              </RulerMark>
            ))}
            <RulerMark $major $span={1}>
              85
            </RulerMark>
          </Ruler>
          <Lanes>
            {tracks.map((t, i) => (
              <Lane key={i}>
                {(t.clips || []).map((c) => (
                  <TrackClip key={c[0]} track={t} clip={c} />
                ))}
              </Lane>
            ))}
          </Lanes>
        </Timeline>
        <ScrollColumn $width={41}>
          <ScrollButton $height={38} aria-label="Playlist options">
            <svg width="5" height="3">
              <rect width="5" height="3" fill="#1d2326" />
            </svg>
          </ScrollButton>
          <ScrollButton $height={38} aria-label="Scroll up">
            <Chevron dir="up" />
          </ScrollButton>
          <ScrollTrack>
            <ScrollThumb $size="64px">
              <svg width="14" height="12">
                <path d="M0 2h14M0 10h14" stroke="#687178" strokeWidth="3" />
              </svg>
            </ScrollThumb>
          </ScrollTrack>
          <ScrollButton $height={38} aria-label="Scroll down">
            <Chevron dir="down" color="#dbe3e6" />
          </ScrollButton>
        </ScrollColumn>
      </Body>
    </div>
  </Window>
);

const App = () => {
  return (
    <>
      <GlobalStyle />
      <TopBar />
      <Playlist />
    </>
  );
};

export default App;
